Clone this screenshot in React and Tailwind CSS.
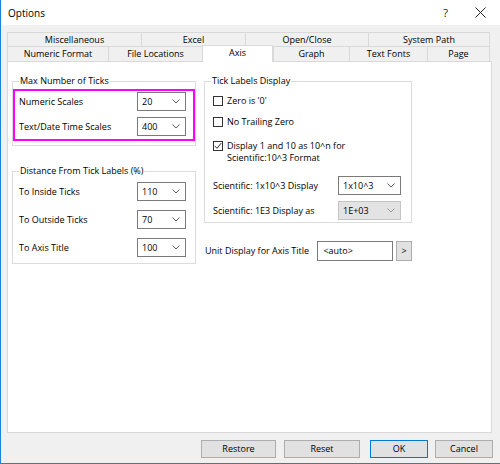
import React from "react";

const rowTop = [
  { label: "Miscellaneous", w: "w-[134px]" },
  { label: "Excel", w: "w-[104px]" },
  { label: "Open/Close", w: "w-[123px]" },
  { label: "System Path", w: "w-[122px]" },
];

const rowBottom = [
  { label: "Numeric Format", w: "w-[101px]" },
  { label: "File Locations", w: "w-[94px]" },
  { label: "Axis", w: "w-[71px]", active: true },
  { label: "Graph", w: "w-[76px]" },
  { label: "Text Fonts", w: "w-[78px]" },
  { label: "Page", w: "w-[63px]" },
];

const Chevron = ({ muted }) => (
  <svg width="8" height="5" viewBox="0 0 8 5" className="shrink-0">
    <polyline
      points="0.5,0.5 4,4 7.5,0.5"
      fill="none"
      stroke={muted ? "#9a9a9a" : "#5a5a5a"}
      strokeWidth="1"
    />
  </svg>
);

const Combo = ({ value, w = "w-[49px]", disabled }) => (
  <div
    className={`${w} h-[19px] shrink-0 flex items-center justify-between pl-[4px] pr-[5px] border ${
      disabled ? "bg-[#e3e3e3] border-[#c4c4c4]" : "bg-white border-[#7a7a7a]"
    }`}
  >
    <span>{value}</span>
    <Chevron muted={disabled} />
  </div>
);

const Check = ({ checked }) => (
  <div className="w-[10px] h-[10px] border border-[#333] bg-white shrink-0 flex items-center justify-center">
    {checked && (
      <svg width="8" height="8" viewBox="0 0 8 8">
        <polyline points="0.8,4 3,6.3 7.3,1" fill="none" stroke="#333" strokeWidth="1" />
      </svg>
    )}
  </div>
);

// group box: legend sits on the top border, padding goes on the inner div
const Group = ({ title, className = "", inner = "", children }) => (
  <fieldset className={`border border-[#dcdcdc] ${className}`}>
    <legend className="ml-[6px] px-[1px] leading-[12px]">{title}</legend>
    <div className={inner}>{children}</div>
  </fieldset>
);

const Btn = ({ label, w, primary, className = "" }) => (
  <div
    className={`${w} h-[18px] flex items-center justify-center bg-[#e1e1e1] border ${
      primary ? "border-[#0078d7]" : "border-[#adadad]"
    } ${className}`}
  >
    {label}
  </div>
);

export default function App() {
  return (
    <div className="w-[500px] h-[464px] bg-[#f0f0f0] border-l border-b border-[#1883d7] flex flex-col font-['Open_Sans',sans-serif] text-[9px] leading-[12px] text-black overflow-hidden">
      {/* title bar */}
      <div className="h-[25px] shrink-0 bg-white flex items-center pl-[7px]">
        <span className="text-[10px]">Options</span>
        <span className="ml-auto mr-[27px] text-[11px] text-[#222]">?</span>
        <svg width="11" height="11" viewBox="0 0 11 11" className="mr-[14px]">
          <path d="M0.5 0.5 L10.5 10.5 M10.5 0.5 L0.5 10.5" stroke="#222" strokeWidth="1" />
        </svg>
      </div>

      <div className="flex-1 flex flex-col px-[6px] pt-[7px]">
        {/* tabs */}
        <div className="flex h-[14px]">
          {rowTop.map((t, i) => (
            <div
              key={t.label}
              className={`${t.w} flex items-center justify-center pt-[1px] border-t border-l border-[#d9d9d9] ${
                i === rowTop.length - 1 ? "border-r" : ""
              }`}
            >
              {t.label}
            </div>
          ))}
        </div>
        <div className="flex h-[15px]">
          {rowBottom.map((t, i) =>
            t.active ? (
              <div
                key={t.label}
                className={`${t.w} h-[17px] -mt-[1px] relative z-10 bg-white flex items-start justify-center pt-[1px] border-t border-l border-r border-[#d9d9d9]`}
              >
                {t.label}
              </div>
            ) : (
              <div
                key={t.label}
                className={`${t.w} flex items-center justify-center border-t border-l border-[#d9d9d9] ${
                  i === rowBottom.length - 1 ? "border-r" : ""
                }`}
              >
                {t.label}
              </div>
            )
          )}
        </div>

        {/* page: Axis */}
        <div className="w-[485px] h-[372px] bg-white border border-[#d9d9d9] flex pl-[4px] pt-[13px] gap-[8px]">
          <div className="w-[184px] flex flex-col">
            <Group title="Max Number of Ticks" inner="pb-[4px]">
              <div className="mt-[2px] border-2 border-[#ff00ff] pt-[1px] pb-[3px] pl-[4px] pr-[7px] flex flex-col gap-[6px]">
                <div className="flex items-center justify-between">
                  <span>Numeric Scales</span>
                  <Combo value="20" />
                </div>
                <div className="flex items-center justify-between">
                  <span>Text/Date Time Scales</span>
                  <Combo value="400" />
                </div>
              </div>
            </Group>

            <Group
              title="Distance From Tick Labels (%)"
              className="mt-[19px]"
              inner="pt-[5px] pb-[6px] pl-[6px] pr-[9px] flex flex-col gap-[9px]"
            >
              <div className="flex items-center justify-between">
                <span>To Inside Ticks</span>
                <Combo value="110" />
              </div>
              <div className="flex items-center justify-between">
                <span>To Outside Ticks</span>
                <Combo value="70" />
              </div>
              <div className="flex items-center justify-between">
                <span>To Axis Title</span>
                <Combo value="100" />
              </div>
            </Group>
          </div>

          <div className="w-[208px] flex flex-col">
            <Group title="Tick Labels Display" inner="pl-[8px] pr-[10px] pb-[2px] flex flex-col">
              <div className="mt-[8px] flex items-center gap-[4px]">
                <Check />
                <span>Zero is '0'</span>
              </div>
              <div className="mt-[9px] flex items-center gap-[4px]">
                <Check />
                <span>No Trailing Zero</span>
              </div>
              <div className="mt-[12px] flex items-start gap-[4px]">
                <div className="mt-[1px]">
                  <Check checked />
                </div>
                <div className="flex flex-col">
                  <span>Display 1 and 10 as 10^n for</span>
                  <span>Scientific:10^3 Format</span>
                </div>
              </div>
              <div className="mt-[12px] flex items-center justify-between">
                <span>Scientific: 1x10^3 Display</span>
                <Combo value="1x10^3" w="w-[63px]" />
              </div>
              <div className="mt-[6px] flex items-center justify-between">
                <span>Scientific: 1E3 Display as</span>
                <Combo value="1E+03" w="w-[63px]" disabled />
              </div>
            </Group>

            <div className="mt-[18px] pl-[1px] flex items-center">
              <span className="w-[113px]">Unit Display for Axis Title</span>
              <div className="w-[76px] h-[20px] border border-[#7a7a7a] bg-white flex items-center pl-[5px]">
                &lt;auto&gt;
              </div>
              <div className="ml-[3px] w-[16px] h-[20px] bg-[#e1e1e1] border border-[#adadad] flex items-center justify-center">
                &gt;
              </div>
            </div>
          </div>
        </div>

        {/* dialog buttons */}
        <div className="mt-[7px] flex pr-[1px]">
          <Btn label="Restore" w="w-[75px]" className="ml-auto" />
          <Btn label="Reset" w="w-[76px]" className="ml-[8px]" />
          <Btn label="OK" w="w-[58px]" primary className="ml-[10px]" />
          <Btn label="Cancel" w="w-[58px]" className="ml-[7px]" />
        </div>
      </div>
    </div>
  );
}
